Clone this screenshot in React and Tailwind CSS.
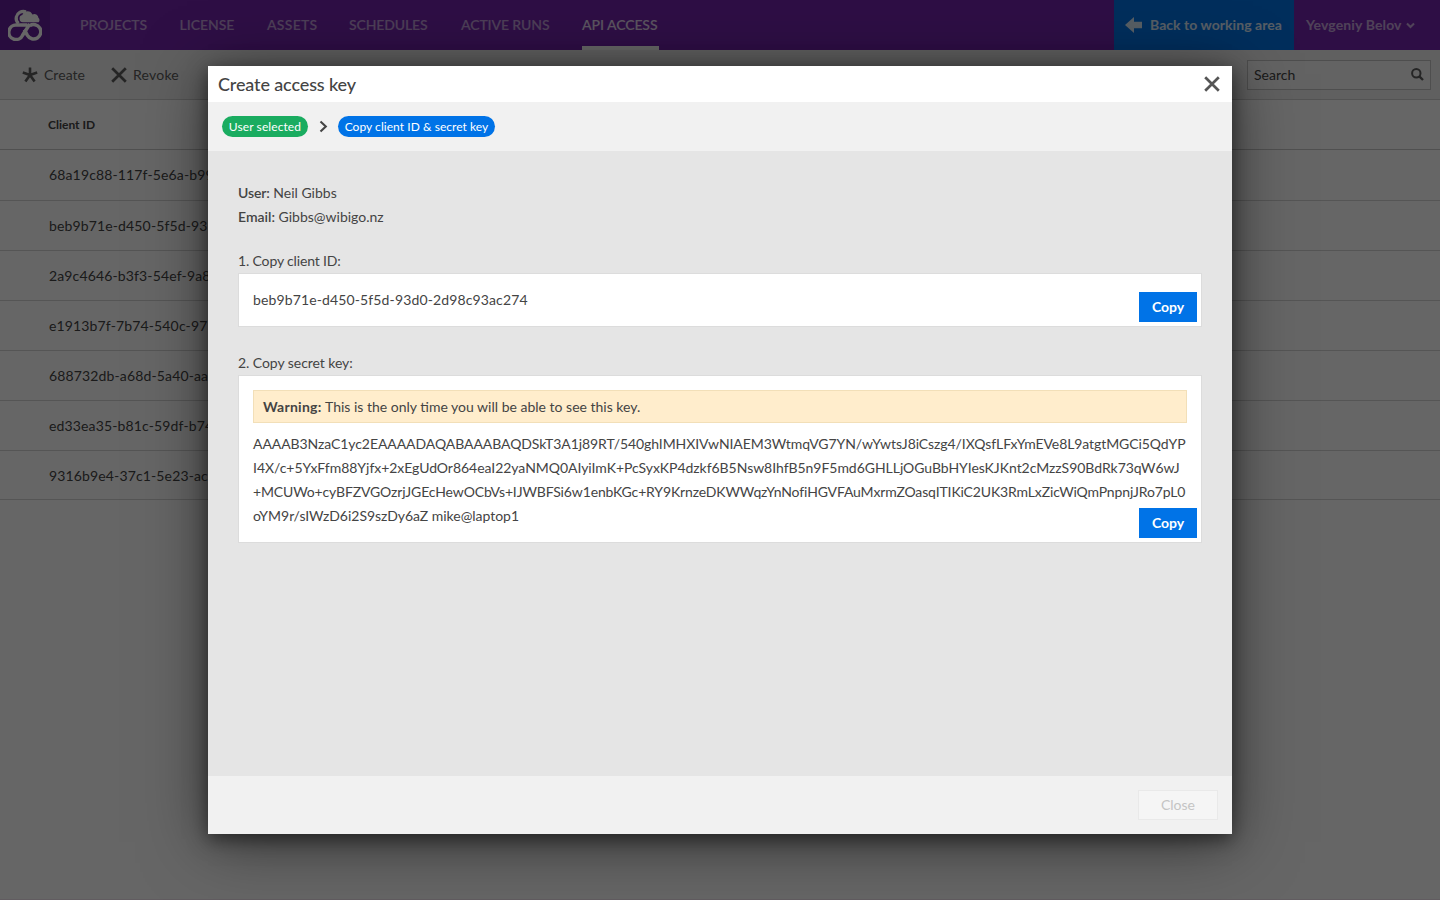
const NAV = [
  { label: "PROJECTS", style: "w-[67.5px]" },
  { label: "LICENSE", style: "w-[55.5px] tracking-[-0.03px]" },
  { label: "ASSETS", style: "w-[50px] tracking-[0.25px]" },
  { label: "SCHEDULES", style: "w-[80px] tracking-[-0.13px]" },
  { label: "ACTIVE RUNS", style: "w-[89px] tracking-[-0.12px]" },
  { label: "API ACCESS", style: "w-[77px] tracking-[-0.08px]", active: true },
];

const ROWS = [
  { id: "68a19c88-117f-5e6a-b99", style: "h-[51px]" },
  { id: "beb9b71e-d450-5f5d-93", style: "h-[50px]" },
  { id: "2a9c4646-b3f3-54ef-9a8", style: "h-[50px]" },
  { id: "e1913b7f-7b74-540c-97", style: "h-[50px]" },
  { id: "688732db-a68d-5a40-aa", style: "h-[50px]" },
  { id: "ed33ea35-b81c-59df-b74", style: "h-[50px]" },
  { id: "9316b9e4-37c1-5e23-ac", style: "h-[49px] pt-px" },
];

const KEY_LINES = [
  { text: "AAAAB3NzaC1yc2EAAAADAQABAAABAQDSkT3A1j89RT/540ghIMHXIVwNIAEM3WtmqVG7YN/wYwtsJ8iCszg4/IXQsfLFxYmEVe8L9atgtMGCi5QdYP", style: "tracking-[-0.082px]" },
  { text: "I4X/c+5YxFfm88Yjfx+2xEgUdOr864eaI22yaNMQ0AIyiImK+PcSyxKP4dzkf6B5Nsw8IhfB5n9F5md6GHLLjOGuBbHYIesKJKnt2cMzzS90BdRk73qW6wJ", style: "tracking-[-0.039px]" },
  { text: "+MCUWo+cyBFZVGOzrjJGEcHewOCbVs+IJWBFSi6w1enbKGc+RY9KrnzeDKWWqzYnNofiHGVFAuMxrmZOasqITIKiC2UK3RmLxZicWiQmPnpnjJRo7pL0", style: "tracking-[-0.142px]" },
  { text: "oYM9r/sIWzD6i2S9szDy6aZ mike@laptop1", style: "tracking-[-0.031px]" },
];

function Logo() {
  return (
    <svg width="34" height="32" viewBox="0 0 34 32" fill="none">
      <path d="M10.6 14.4C8.6 12.8 7.8 10.4 8.3 8C9.2 3.8 13.2 1.5 18 2.7" stroke="#fff" strokeWidth="3.2" />
      <path d="M15 13.2a3.6 3.6 0 0 1-.7-7.1 5.3 5.3 0 0 1 10.1-.5 3.9 3.9 0 0 1 6 3.2 2.9 2.9 0 0 1 .2 4.4z" fill="#fff" />
      <path d="M21.8 15L14.6 26.2A7.2 7.2 0 1 1 8.8 16.1H19.4" stroke="#fff" strokeWidth="3.5" />
      <path d="M16.3 20.6L19.4 26.4A7.2 7.2 0 1 0 21.7 16.7" stroke="#fff" strokeWidth="3.5" />
    </svg>
  );
}

function Cross({ size, className }) {
  return (
    <svg width={size} height={size} viewBox="0 0 16 16" fill="none" className={className}>
      <path d="M1.2 1.2L14.8 14.8M14.8 1.2L1.2 14.8" stroke="currentColor" strokeWidth="2.7" />
    </svg>
  );
}

function CopyButton() {
  return (
    <button className="absolute right-1 bottom-1 flex h-[30px] w-[58px] items-center justify-center bg-[#0073e7] font-bold tracking-[-0.07px] text-white">
      Copy
    </button>
  );
}

function Page() {
  return (
    <div className="flex h-full flex-col bg-white">
      <header className="flex h-[50px] shrink-0 bg-[#7425ad]">
        <div className="flex w-[50px] items-center justify-center bg-[#651f9b]">
          <Logo />
        </div>
        <nav className="flex gap-8 pl-[30px] font-semibold whitespace-nowrap">
          {NAV.map((item) => (
            <a
              key={item.label}
              className={`flex h-[50px] items-center border-b-4 pt-1 ${item.style} ${item.active ? "border-white text-white/80" : "border-transparent text-white/55"}`}
            >
              {item.label}
            </a>
          ))}
        </nav>
        <div className="ml-auto flex font-bold whitespace-nowrap text-white/85">
          <div className="flex w-[180px] items-center bg-[#0073e7] pl-[11px]">
            <svg width="17" height="16" viewBox="0 0 17 16" className="mr-2">
              <path d="M0 8L9 0V4.8H17V11.2H9V16Z" fill="currentColor" />
            </svg>
            <span className="tracking-[0.05px]">Back to working area</span>
          </div>
          <div className="flex w-[146px] items-center pl-3 text-white/60">
            <span className="tracking-[0.12px]">Yevgeniy Belov</span>
            <svg width="9" height="7" viewBox="0 0 9 7" fill="none" className="ml-1">
              <path d="M1 1.5L4.5 5L8 1.5" stroke="currentColor" strokeWidth="2.1" />
            </svg>
          </div>
        </div>
      </header>

      <div className="flex h-[50px] shrink-0 items-center border-b border-[#d0d0d0] bg-[#f1f1f1] pr-[9px] pl-[22px] text-[#5c5c5c]">
        <svg width="16" height="16" viewBox="0 0 16 16" fill="none" className="mr-1.5">
          <path d="M8 8V.5M8 8L.8 5.6M8 8L15.2 5.6M8 8L3.4 14.6M8 8L12.6 14.6" stroke="currentColor" strokeWidth="2.6" />
        </svg>
        <span className="w-[67px] tracking-[0.04px]">Create</span>
        <Cross size={16} className="mr-1.5" />
        <span className="tracking-[0.22px]">Revoke</span>
        <div className="ml-auto flex h-[30px] w-[184px] items-center justify-between border border-[#c4c4c4] bg-[#f8f8f8] px-1.5">
          <span className="text-[#444]">Search</span>
          <svg width="13" height="13" viewBox="0 0 13 13" fill="none">
            <circle cx="5.3" cy="5.3" r="4.2" stroke="currentColor" strokeWidth="2" />
            <path d="M8.3 8.3L12 12" stroke="currentColor" strokeWidth="2.4" />
          </svg>
        </div>
      </div>

      <div className="flex h-[50px] shrink-0 items-center border-b border-[#c8c8c8] pl-12 text-xs font-bold">Client ID</div>
      {ROWS.map((row) => (
        <div key={row.id} className={`flex shrink-0 items-center border-b border-[#d4d4d4] pl-[49px] tracking-[0.14px] ${row.style}`}>
          {row.id}
        </div>
      ))}
      <div className="mt-auto h-px bg-[#f3e6f0]" />
    </div>
  );
}

function Dialog() {
  return (
    <div className="flex h-[768px] w-[1024px] flex-col bg-[#e5e5e5] shadow-[0_8px_60px_rgba(0,0,0,0.5),0_5px_18px_rgba(0,0,0,0.5)]">
      <div className="flex h-9 items-center justify-between bg-white pr-3 pl-2.5">
        <h1 className="text-lg leading-6 font-medium tracking-[-0.13px]">Create access key</h1>
        <Cross size={16} className="text-[#555]" />
      </div>

      <div className="flex h-[49px] items-center bg-[#f1f1f1] pl-3.5 text-xs font-normal text-white">
        <span className="flex h-[21px] w-[86px] items-center justify-center rounded-full bg-[#1aac60] tracking-[0.095px]">User selected</span>
        <svg width="9" height="13" viewBox="0 0 9 13" fill="none" className="mr-[10px] ml-[11px]">
          <path d="M1.5 1.5L6.8 6.5L1.5 11.5" stroke="#444" strokeWidth="2.1" />
        </svg>
        <span className="flex h-[21px] w-[157px] items-center justify-center rounded-full bg-[#0073e7] tracking-[0.05px]">Copy client ID &amp; secret key</span>
      </div>

      <div className="flex-1 px-[30px] pt-[30px] leading-6">
        <p><b className="font-semibold tracking-[-0.12px]">User:</b> Neil Gibbs</p>
        <p><b className="font-semibold">Email:</b> Gibbs@wibigo.nz</p>

        <p className="mt-5 tracking-[-0.15px]">1. Copy client ID:</p>
        <div className="relative h-[54px] border border-[#dcdcdc] bg-white px-3.5 pt-3.5">
          <p className="tracking-[0.13px]">beb9b71e-d450-5f5d-93d0-2d98c93ac274</p>
          <CopyButton />
        </div>

        <p className="mt-6 tracking-[-0.06px]">2. Copy secret key:</p>
        <div className="relative h-[168px] border border-[#dcdcdc] bg-white px-3.5 pt-3.5">
          <div className="mb-[9px] flex h-[33px] items-center border border-[#f2dfb8] bg-[#ffedcc] pl-[9px]">
            <b className="w-[62px] tracking-[0.25px]">Warning:</b>
            <span>This is the only time you will be able to see this key.</span>
          </div>
          {KEY_LINES.map((line) => (
            <p key={line.text} className={`whitespace-nowrap ${line.style}`}>{line.text}</p>
          ))}
          <CopyButton />
        </div>
      </div>

      <div className="flex h-[58px] items-center justify-end bg-[#f1f1f1] pr-3.5">
        <button className="h-[30px] w-20 border border-[#e9e9e9] bg-[#f5f5f5] text-[#c4c4c4]">Close</button>
      </div>
    </div>
  );
}

export default function App() {
  return (
    <div className="relative h-[900px] w-full overflow-hidden font-[Lato,sans-serif] text-sm text-[#444]">
      <Page />
      <div className="absolute inset-0 flex items-center justify-center bg-black/60">
        <Dialog />
      </div>
    </div>
  );
}
